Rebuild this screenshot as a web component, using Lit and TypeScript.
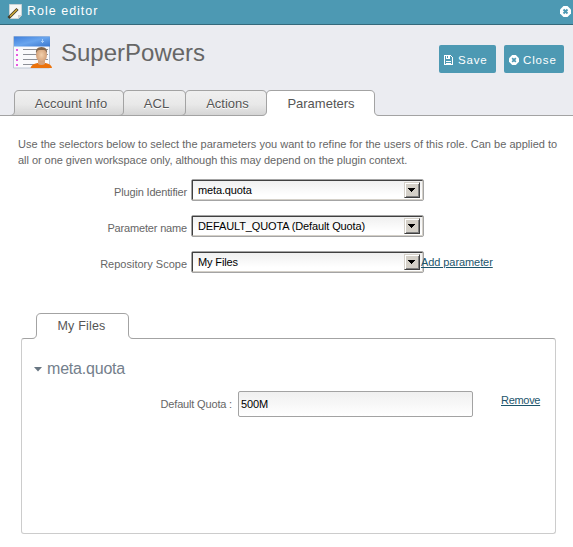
import { LitElement, html, svg, css } from "lit";
import { customElement, property } from "lit/decorators.js";

@customElement("folder-tab")
class FolderTab extends LitElement {
  @property({ type: Number }) width = 100;
  @property() tone = "idle";

  static styles = css`
    :host { display: block; position: relative; height: 26px; flex: none; }
    .shape { position: absolute; left: -4px; top: 0; display: block; overflow: visible; }
    .label { position: relative; display: block; text-align: center; line-height: 27px; white-space: nowrap; }
  `;

  render() {
    const w = this.width;
    const active = this.tone === "active";
    const outline = `M0 25.5 Q4.5 25.5 4.5 21 V5 Q4.5 .5 9 .5 H${w} Q${w + 4.5} .5 ${w + 4.5} 5 V21 Q${w + 4.5} 25.5 ${w + 9} 25.5`;
    return html`
      <svg class="shape" width=${w + 9} height="26">
        <defs>
          <linearGradient id="g" x1="0" y1="0" x2="0" y2="1">
            <stop offset="0" stop-color="#f0f0f0"></stop>
            <stop offset=".55" stop-color="#e9e9e9"></stop>
            <stop offset="1" stop-color="#d4d4d4"></stop>
          </linearGradient>
        </defs>
        ${active
          ? svg`<path d="${outline} V26 H0 Z" fill="#fff"></path><path d=${outline} fill="none" stroke="#a3a3a3"></path>`
          : svg`<path d="${outline} Z" fill="url(#g)"></path><path d="${outline} Z" fill="none" stroke="#a3a3a3"></path>`}
      </svg>
      <span class="label" style="width:${w}px"><slot></slot></span>
    `;
  }
}

@customElement("select-box")
class SelectBox extends LitElement {
  static styles = css`
    :host {
      display: flex; box-sizing: border-box; width: 233px; height: 22px; flex: none;
      border: 1px solid #a4a4a4; border-radius: 2px; background: #fff; letter-spacing: -.13px;
    }
    .inner {
      flex: 1; display: flex; align-items: center; justify-content: space-between;
      box-sizing: border-box; padding: 0 2px 0 5px; color: #000;
      border: 1px solid; border-color: #404040 #d4d0c8 #d4d0c8 #404040;
      background: linear-gradient(#f0f0f0, #fff 80%);
    }
    .arrow {
      width: 16px; height: 16px; box-sizing: border-box; background: #d4d0c8;
      border: 1px solid; border-color: #d4d0c8 #404040 #404040 #d4d0c8;
      box-shadow: inset 1px 1px #fff, inset -1px -1px #808080;
    }
    svg { display: block; }
  `;
  render() {
    return html`<div class="inner"><slot></slot>
      <div class="arrow"><svg width="14" height="14" shape-rendering="crispEdges"><path d="M3 5h7v1h-1v1h-1v1h-1v1h-1v-1h-1v-1h-1v-1h-1z" fill="#000"></path></svg></div>
    </div>`;
  }
}

const crossBadge = (size: number) => html`<svg width=${size} height=${size} viewBox="0 0 11 11">
  <path d="M3.5 0h4L11 3.5v4L7.5 11h-4L0 7.5v-4z" fill="#fff"></path>
  <path d="M3.5 3.5l4 4M7.5 3.5l-4 4" stroke="#4d99b3" stroke-width="1.900"></path>
</svg>`;

@customElement("app-root")
class AppRoot extends LitElement {
  static styles = css`
    :host {
      display: block; width: 573px; height: 547px; overflow: hidden; background: #fff;
      font: 11px/16px "Liberation Sans", Arial, sans-serif; color: #666;
    }
    svg { display: block; flex: none; }
    .titlebar {
      height: 25px; box-sizing: border-box; border-bottom: 1px solid #34697b; background: #4d99b3;
      display: flex; align-items: center; padding: 0 2px 2px 7px; color: #fff;
    }
    .title { font-size: 12.5px; letter-spacing: 1px; margin-left: 4px; flex: 1; }
    .head { height: 65px; background: #ebecf1; display: flex; align-items: flex-start; padding: 0 9px 0 13px; }
    .portrait { margin-top: 11px; }
    .name { font-size: 24px; line-height: 28px; margin: 14px 0 0 8px; flex: 1; }
    .btn {
      height: 28px; margin-top: 20px; box-sizing: border-box; border-radius: 2px; background: #4d99b3; color: #fff;
      display: flex; align-items: center; padding: 2px 0 0 5px; font-size: 11.5px; letter-spacing: .85px;
    }
    .save { width: 57px; margin-right: 8px; }
    .close { width: 60px; }
    .btn span { margin-left: 5px; }
    .close span { margin-left: 4px; }
    .tabs {
      height: 26px; display: flex; padding-left: 14px; font-size: 13px; color: #555;
      background: linear-gradient(#a3a3a3, #a3a3a3) 0 25px / 100% 1px no-repeat #ebecf1;
    }
    .t1 { width: 109px; text-indent: 5px; } .t2 { width: 62px; text-indent: 5px; } .t3 { width: 81px; text-indent: 4px; } .t4 { width: 108px; text-indent: 2px; }
    .tabs folder-tab { text-shadow: 0 1px #fff; }
    .intro { margin: 20px 0 0 18px; white-space: nowrap; }
    .line1 { letter-spacing: .01px; }
    .line2 { letter-spacing: -.04px; }
    .form { margin-top: 11px; display: flex; flex-direction: column; gap: 14px; }
    .row { display: flex; height: 22px; }
    .cap { letter-spacing: -.17px; }
    .row .cap { width: 187px; margin-right: 4px; text-align: right; line-height: 26px; }
    .row .cap.wide { letter-spacing: 0; }
    .link { color: #1c556c; text-decoration: underline; }
    .row .link { margin: 3px 0 0 -3px; position: relative; letter-spacing: -.08px; }
    .subtabs { margin-top: 40px; height: 25px; padding-left: 36px; display: flex; position: relative; font-size: 12.5px; letter-spacing: .2px; color: #555; }
    .sub { width: 92px; text-indent: -1px; }
    .panel {
      margin-left: 21px; width: 535px; height: 196px; box-sizing: border-box;
      border: 1px solid #ccc; border-top-color: #a3a3a3; border-radius: 3px;
    }
    .group { display: flex; align-items: center; gap: 5px; margin: 19px 0 0 12px; height: 22px; font-size: 16px; letter-spacing: -.2px; color: #74808c; }
    .field { display: flex; margin-top: 11px; height: 26px; }
    .field .cap { width: 210px; text-align: right; line-height: 27px; }
    .input {
      width: 235px; margin-left: 6px; box-sizing: border-box; border: 1px solid #a3a3a3; border-radius: 2px;
      background: linear-gradient(#f0f0f0, #fff); color: #000; padding-left: 2px; line-height: 25px; letter-spacing: -.15px;
    }
    .remove { margin: 1px 0 0 28px; letter-spacing: -.3px; }
  `;

  render() {
    return html`
      <div class="titlebar">
        <svg width="16" height="17" viewBox="0 0 16 17">
          <path d="M2.500 1.500h12v11l-3 3h-9z" fill="#f7f7f5" stroke="#c9d3d6"></path>
          <path d="M14.500 12l-3.500 0v3.500z" fill="#ccc"></path>
          <path d="M1.500 15L10.500 6" stroke="#443a25" stroke-width="3"></path>
          <path d="M3 13.500L10 6.500" stroke="#d8b23c" stroke-width="1.200"></path>
        </svg>
        <span class="title">Role editor</span>
        ${crossBadge(11)}
      </div>
      <div class="head">
        <svg class="portrait" width="40" height="33" viewBox="0 0 40 33">
          <defs>
            <linearGradient id="b" x1="0" y1="0" x2="1" y2="1"><stop offset="0" stop-color="#3f7fdc"></stop><stop offset=".5" stop-color="#69a5ee"></stop><stop offset="1" stop-color="#3976cd"></stop></linearGradient>
            <radialGradient id="f"><stop offset="0" stop-color="#f3d0ab"></stop><stop offset="1" stop-color="#d3a078"></stop></radialGradient>
          </defs>
          <path d="M.5 .5h36v31.500h-36z" fill="#fafafc" stroke="#bcc6d4"></path>
          <path d="M1 .5h36v10h-36z" fill="url(#b)"></path>
          <path d="M29.500 3v4M28 5.500h3" stroke="#a9cef8"></path>
          <path d="M3 14h2M3 19h2M3 24h2M3 29h2" stroke="#e424d8" stroke-width="1.500"></path>
          <path d="M10 13.500h25M10 18.500h25M10 23.500h25M10 28.500h12" stroke="#8d9097"></path>
          <path d="M17.500 32q1-4 7-5h8q6 1 6.500 5z" fill="#eb720b"></path>
          <path d="M25 24h7v4q-3.500 2-7 0z" fill="#d6a47d"></path>
          <ellipse cx="28.500" cy="19" rx="5.500" ry="7" fill="url(#f)"></ellipse>
          <path d="M23 18q-1-7 5.500-7t5.500 7q-1-4-3-4h-5q-2 0-3 4z" fill="#82664b"></path>
        </svg>
        <div class="name">SuperPowers</div>
        <div class="btn save">
          <svg width="9" height="10" viewBox="0 0 9 10" shape-rendering="crispEdges"><path d="M0 0h7v1h1v1h1v8H0z" fill="#fff"></path><path d="M1 1h1v3h4V1h1v1h1v7H7V6H2v3H1z" fill="#4d99b3"></path><path d="M3 1h1v2H3zM2 7h5v1H2z" fill="#4d99b3"></path></svg>
          <span>Save</span>
        </div>
        <div class="btn close">${crossBadge(10)}<span>Close</span></div>
      </div>
      <div class="tabs">
        <folder-tab class="t1" .width=${109}>Account Info</folder-tab>
        <folder-tab class="t2" .width=${62}>ACL</folder-tab>
        <folder-tab class="t3" .width=${81}>Actions</folder-tab>
        <folder-tab class="t4" .width=${108} tone="active">Parameters</folder-tab>
      </div>
      <div class="intro">
        <div class="line1">Use the selectors below to select the parameters you want to refine for the users of this role. Can be applied to</div>
        <div class="line2">all or one given workspace only, although this may depend on the plugin context.</div>
      </div>
      <div class="form">
        <div class="row"><span class="cap">Plugin Identifier</span><select-box>meta.quota</select-box></div>
        <div class="row"><span class="cap">Parameter name</span><select-box>DEFAULT_QUOTA (Default Quota)</select-box></div>
        <div class="row"><span class="cap wide">Repository Scope</span><select-box>My Files</select-box><span class="link">Add parameter</span></div>
      </div>
      <div class="subtabs"><folder-tab class="sub" .width=${92} tone="active">My Files</folder-tab></div>
      <div class="panel">
        <div class="group"><svg width="8" height="5"><path d="M0 0h8L4 4.500z" fill="#687682"></path></svg>meta.quota</div>
        <div class="field"><span class="cap">Default Quota :</span><div class="input">500M</div><span class="link remove">Remove</span></div>
      </div>
    `;
  }
}
